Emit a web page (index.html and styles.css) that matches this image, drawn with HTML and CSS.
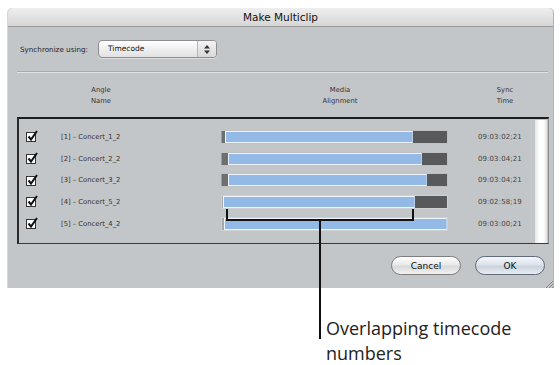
FILE: index.html
```html
<!DOCTYPE html>
<html>
<head>
<meta charset="utf-8">
<link rel="stylesheet" href="styles.css">
</head>
<body>
<div class="stage">
  <div class="window">
    <div class="titlebar">Make Multiclip</div>
    <div class="content">
      <div class="syncrow">
        <span class="label">Synchronize using:</span>
        <div class="popup">
          <span class="popup-text">Timecode</span>
          <span class="popup-arrows">
            <svg width="8" height="11" viewBox="0 0 8 11"><path d="M4 1 L7 4.5 H1 Z M4 10 L7 6.5 H1 Z" fill="#333"/></svg>
          </span>
        </div>
      </div>
      <div class="separator"></div>
      <div class="headers">
        <div class="h h-angle">Angle<br>Name</div>
        <div class="h h-media">Media<br>Alignment</div>
        <div class="h h-sync">Sync<br>Time</div>
      </div>
      <div class="table">
        <div class="rows">
          <div class="row">
            <span class="check"><svg width="13" height="13" viewBox="0 0 13 13"><rect x="0.5" y="2.5" width="9" height="9" fill="#fff" stroke="#333"/><path d="M2.5 6.5 L5 9.5 L11 1" fill="none" stroke="#111" stroke-width="2"/></svg></span>
            <span class="name">[1] – Concert_1_2</span>
            <div class="bar"><span class="cap" style="width:4px"></span><span class="blue" style="width:188px"></span><span class="dark"></span></div>
            <span class="tc">09:03:02;21</span>
          </div>
          <div class="row">
            <span class="check"><svg width="13" height="13" viewBox="0 0 13 13"><rect x="0.5" y="2.5" width="9" height="9" fill="#fff" stroke="#333"/><path d="M2.5 6.5 L5 9.5 L11 1" fill="none" stroke="#111" stroke-width="2"/></svg></span>
            <span class="name">[2] – Concert_2_2</span>
            <div class="bar"><span class="cap" style="width:7px"></span><span class="blue" style="width:194px"></span><span class="dark"></span></div>
            <span class="tc">09:03:04;21</span>
          </div>
          <div class="row">
            <span class="check"><svg width="13" height="13" viewBox="0 0 13 13"><rect x="0.5" y="2.5" width="9" height="9" fill="#fff" stroke="#333"/><path d="M2.5 6.5 L5 9.5 L11 1" fill="none" stroke="#111" stroke-width="2"/></svg></span>
            <span class="name">[3] – Concert_3_2</span>
            <div class="bar"><span class="cap" style="width:7px"></span><span class="blue" style="width:199px"></span><span class="dark"></span></div>
            <span class="tc">09:03:04;21</span>
          </div>
          <div class="row">
            <span class="check"><svg width="13" height="13" viewBox="0 0 13 13"><rect x="0.5" y="2.5" width="9" height="9" fill="#fff" stroke="#333"/><path d="M2.5 6.5 L5 9.5 L11 1" fill="none" stroke="#111" stroke-width="2"/></svg></span>
            <span class="name">[4] – Concert_5_2</span>
            <div class="bar bar-light"><span class="cap cap-light" style="width:1px"></span><span class="blue" style="width:192px"></span><span class="dark"></span></div>
            <span class="tc">09:02:58;19</span>
          </div>
          <div class="row">
            <span class="check"><svg width="13" height="13" viewBox="0 0 13 13"><rect x="0.5" y="2.5" width="9" height="9" fill="#fff" stroke="#333"/><path d="M2.5 6.5 L5 9.5 L11 1" fill="none" stroke="#111" stroke-width="2"/></svg></span>
            <span class="name">[5] – Concert_4_2</span>
            <div class="bar bar-light"><span class="cap cap-light" style="width:2px"></span><span class="blue" style="width:224px"></span><span class="light"></span></div>
            <span class="tc">09:03:00;21</span>
          </div>
        </div>
        <div class="scroll"></div>
      </div>
      <div class="buttons">
        <button class="btn">Cancel</button>
        <button class="btn btn-default">OK</button>
      </div>
    </div>
    <svg class="grip" width="8" height="8" viewBox="0 0 8 8"><path d="M8 1 L1 8 M8 4 L4 8 M8 7 L7 8" stroke="#777" stroke-width="0.8"/></svg>
  </div>

  <div class="bracket"></div>
  <div class="leader"></div>
  <div class="callout">Overlapping timecode<br>numbers</div>
</div>
</body>
</html>
```
FILE: styles.css
```css
* { box-sizing: border-box; }
html, body { margin: 0; padding: 0; background: #fff; }
body { font-family: "DejaVu Sans", "Liberation Sans", sans-serif; color: #222; }

.stage { position: relative; width: 560px; height: 365px; padding: 8px 0 0 7px; }

.window {
  position: relative;
  width: 547px;
  height: 280px;
  background: #c3c6c9;
  border-radius: 5px 5px 0 0;
  border-left: 1px solid #d6d8da;
  border-right: 1px solid #b0b3b6;
}

.titlebar {
  height: 19px;
  border-radius: 5px 5px 0 0;
  background: linear-gradient(#eeeeee, #d6d6d6);
  border-bottom: 1px solid #9a9a9a;
  text-align: center;
  font-size: 10.5px;
  line-height: 19px;
  color: #111;
}

.content { padding: 13px 0 0 9px; }

.syncrow { display: flex; align-items: center; height: 18px; }
.label { font-size: 7.2px; color: #222; width: 81px; padding-left: 3px; }

.popup {
  display: flex;
  width: 119px;
  height: 18px;
  border: 1px solid #8e8e8e;
  border-radius: 4px;
  background: linear-gradient(#ffffff, #ececec 60%, #e2e2e2);
  box-shadow: 0 1px 0 rgba(255,255,255,0.4);
}
.popup-text { flex: 1; font-size: 7.5px; line-height: 16px; padding-left: 9px; color: #111; }
.popup-arrows {
  width: 19px;
  border-left: 1px solid #b8b8b8;
  display: flex; align-items: center; justify-content: center;
  background: linear-gradient(#f4f4f4, #d8d8d8);
  border-radius: 0 3px 3px 0;
}

.separator {
  margin-top: 13px;
  width: 531px;
  height: 2px;
  border-top: 1px solid #a9acaf;
  border-bottom: 1px solid #e0e2e4;
}

.headers { position: relative; height: 44px; font-size: 6.8px; line-height: 11px; color: #333; }
.h { position: absolute; top: 12px; text-align: center; width: 80px; }
.h-angle { left: 44px; }
.h-media { left: 283px; }
.h-sync { left: 448px; }

.table {
  display: flex;
  width: 532px;
  height: 127px;
  border-top: 2px solid #1d1d1d;
  border-left: 2px solid #2a2a2a;
  border-bottom: 1px solid #3a3a3a;
  border-right: 1px solid #8a8c8e;
  background: #c3c6c9;
}
.rows { flex: 1; padding-top: 7px; }
.scroll {
  width: 12px;
  margin: 1px 1px 0 0;
  background: linear-gradient(90deg, #e8e8e8, #ffffff 40%, #ffffff 70%, #e0e0e0);
}

.row { display: flex; align-items: center; height: 21.7px; }
.check { width: 42px; padding-left: 7px; display: flex; }
.name { width: 160px; font-size: 6.8px; color: #333; }

.bar {
  display: flex;
  width: 227px;
  height: 14px;
  background: #d6d6d6;
  border: 1px solid #c0c0c0;
  border-left: none;
}
.cap { background: #6f6f6f; border-left: 1px solid #9a9a9a; }
.cap-light { background: #a8a8a8; border: none; }
.blue { background: #93b9e7; border: 1px solid #eef4fb; border-right: 1px solid #b9cfe8; }
.dark { flex: 1; background: #58595b; }
.light { flex: 1; background: #d8d8d8; }
.bar-light { border: 1px solid #cfd0d2; }

.tc { margin-left: 30px; font-size: 7px; color: #444; letter-spacing: 0.1px; }

.buttons { display: flex; justify-content: flex-end; gap: 14px; padding: 12px 8px 0 0; }
.btn {
  font-family: "DejaVu Sans", sans-serif;
  font-size: 9px;
  color: #111;
  height: 19px;
  width: 70px;
  border-radius: 10px;
  border: 1px solid #7d7d7d;
  background: linear-gradient(#ffffff, #e9e9e9 45%, #d9d9d9 55%, #f2f2f2);
  padding: 0;
}
.btn-default { border-color: #5f6b78; background: linear-gradient(#f5f7fa, #dde3ea 45%, #cbd3dc 55%, #e8edf2); }

.grip { position: absolute; right: 0; bottom: 0; }

.bracket {
  position: absolute;
  left: 226px; top: 209px;
  width: 188px; height: 12px;
  border: 2px solid #111;
  border-top: none;
}
.leader {
  position: absolute;
  left: 319px; top: 220px;
  width: 1.5px; height: 119px;
  background: #111;
}
.callout {
  position: absolute;
  left: 326px; top: 316px;
  font-family: "Open Sans", "Liberation Sans", sans-serif;
  font-size: 18px;
  line-height: 25px;
  color: #222;
}
```
